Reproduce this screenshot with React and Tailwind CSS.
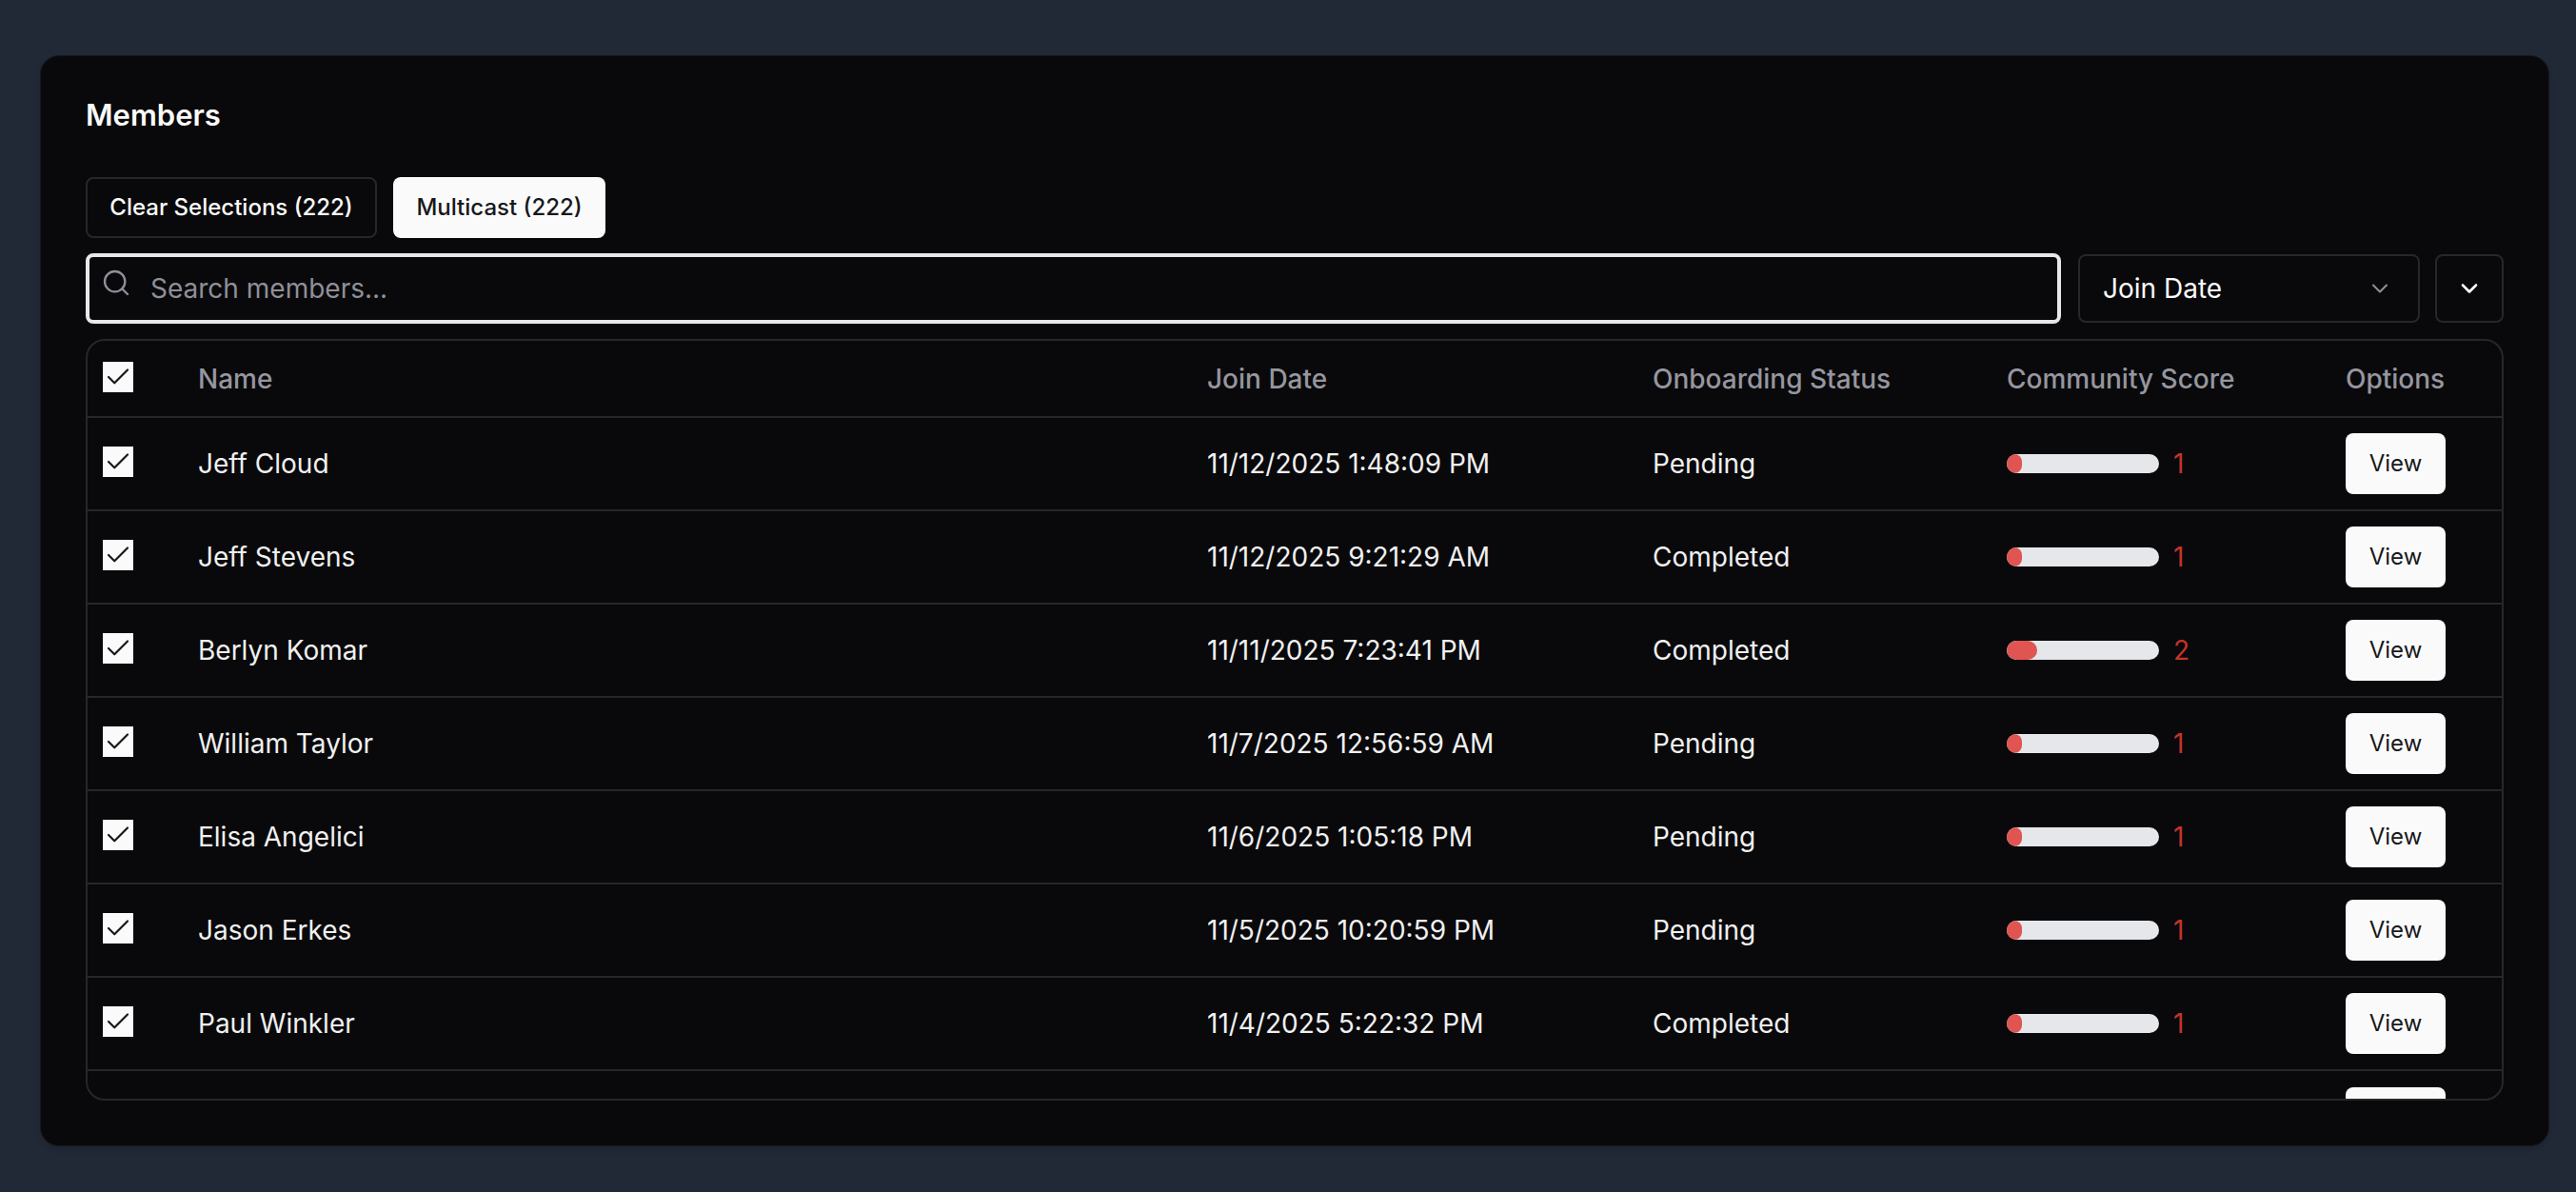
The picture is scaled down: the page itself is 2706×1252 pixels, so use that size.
import { Search, ChevronDown, Check } from 'lucide-react';

const members = [
  { name: 'Jeff Cloud', joined: '11/12/2025 1:48:09 PM', status: 'Pending', score: 1 },
  { name: 'Jeff Stevens', joined: '11/12/2025 9:21:29 AM', status: 'Completed', score: 1 },
  { name: 'Berlyn Komar', joined: '11/11/2025 7:23:41 PM', status: 'Completed', score: 2 },
  { name: 'William Taylor', joined: '11/7/2025 12:56:59 AM', status: 'Pending', score: 1 },
  { name: 'Elisa Angelici', joined: '11/6/2025 1:05:18 PM', status: 'Pending', score: 1 },
  { name: 'Jason Erkes', joined: '11/5/2025 10:20:59 PM', status: 'Pending', score: 1 },
  { name: 'Paul Winkler', joined: '11/4/2025 5:22:32 PM', status: 'Completed', score: 1 },
];

function CheckBox() {
  return (
    <div className="w-8 h-8 bg-[#fafafa] flex items-center justify-center text-[#18181b] -mt-1">
      <Check size={30} strokeWidth={1.75} />
    </div>
  );
}

function ViewButton() {
  return (
    <button className="w-[105px] h-16 rounded-lg bg-[#fafafa] text-[#18181b] text-[24px] font-normal">
      View
    </button>
  );
}

export default function App() {
  return (
    <div
      className="h-screen bg-[#222936] pl-[42px] pr-[28px] pt-[58px] pb-[48px] font-['Inter',sans-serif]"
    >
      <div className="h-full flex flex-col rounded-[20px] bg-[#09090b] border border-[#18181b] p-[47px] shadow-md">
        <h2 className="text-[31px] leading-[36px] -mt-[3px] font-semibold text-[#fafafa]">Members</h2>

        {/* Actions */}
        <div className="flex gap-[17px] mt-[47px]">
          <button className="h-16 w-[306px] rounded-lg border-2 border-[#27272a] text-[#fafafa] text-[24px] font-[450]">
            Clear Selections (222)
          </button>
          <button className="h-16 w-[223px] rounded-lg bg-[#fafafa] text-[#18181b] text-[24px] font-[450]">
            Multicast (222)
          </button>
        </div>

        {/* Filters */}
        <div className="flex items-center gap-4 mt-4">
          <div className="relative flex-1">
            <Search size={32} strokeWidth={1.75} className="absolute left-[16px] top-[15px] text-[#8f8f98]" />
            <input
              placeholder="Search members..."
              className="w-full h-[74px] rounded-lg border-4 border-[#e8e8e8] bg-transparent pl-[64px] pr-4 text-[28px] text-[#fafafa] outline-none placeholder:text-[#8f8f98]"
            />
          </div>
          <div className="w-[359px] h-[72px] ml-[2px] rounded-lg border-2 border-[#27272a] flex items-center justify-between pl-[24px] pr-[26px] text-[28px] text-[#fafafa]">
            <span>Join Date</span>
            <ChevronDown size={28} strokeWidth={1.75} className="text-[#8f8f98]" />
          </div>
          <button className="w-[72px] h-[72px] rounded-lg border-2 border-[#27272a] flex items-center justify-center text-[#fafafa]">
            <ChevronDown size={28} strokeWidth={2.25} />
          </button>
        </div>

        {/* Table */}
        <div className="flex-1 min-h-0 mt-4 rounded-[20px] border-2 border-[#27272a] overflow-hidden">
          <table className="w-full table-fixed border-collapse text-left text-[28px]">
            <colgroup>
              <col className="w-[116px]" />
              <col className="w-[1060px]" />
              <col className="w-[468px]" />
              <col className="w-[372px]" />
              <col className="w-[356px]" />
              <col />
            </colgroup>
            <thead>
              <tr className="h-[80px] border-b-2 border-[#27272a] text-[#96969f]">
                <th className="pl-4 font-medium"><CheckBox /></th>
                <th className="font-medium">Name</th>
                <th className="font-medium">Join Date</th>
                <th className="font-medium">Onboarding Status</th>
                <th className="font-medium">Community Score</th>
                <th className="font-medium">Options</th>
              </tr>
            </thead>
            <tbody className="text-[#f0f0f0]">
              {members.map(m => (
                <tr key={m.name} className="h-[98px] border-b-2 border-[#27272a]">
                  <td className="pl-4"><CheckBox /></td>
                  <td>{m.name}</td>
                  <td>{m.joined}</td>
                  <td>{m.status}</td>
                  <td>
                    <div className="flex items-center gap-[15px]">
                      <div className="w-40 h-5 rounded-full bg-[#e5e7eb] overflow-hidden">
                        <div
                          className="h-full rounded-full bg-[#e05551]"
                          style={{ width: `${m.score * 16}px` }}
                        />
                      </div>
                      <span className="text-[#c5332a]">{m.score}</span>
                    </div>
                  </td>
                  <td><ViewButton /></td>
                </tr>
              ))}
              {/* next row is cut off by the scroll area */}
              <tr className="h-[98px]">
                <td colSpan={5} />
                <td><ViewButton /></td>
              </tr>
            </tbody>
          </table>
        </div>
      </div>
    </div>
  );
}
